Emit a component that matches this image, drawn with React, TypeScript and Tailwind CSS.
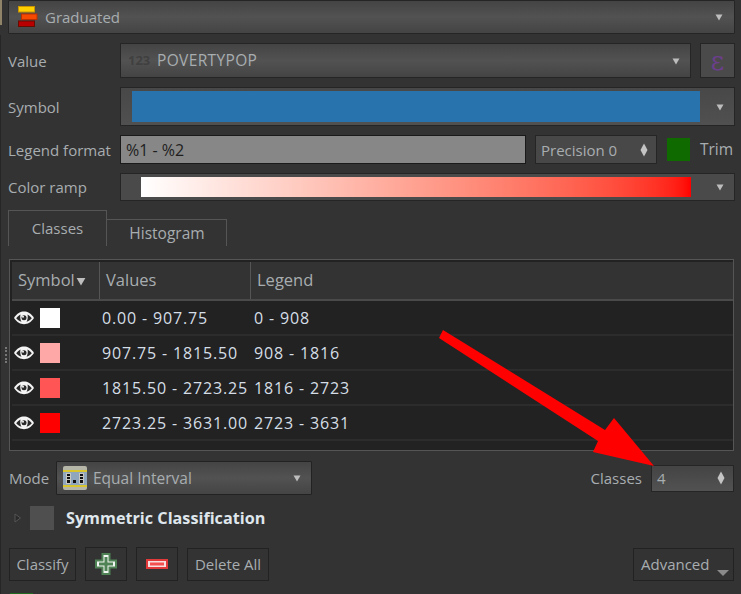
const font = { fontFamily: '"Open Sans", "Noto Sans", sans-serif' };

function Tri({ className = "" }: { className?: string }) {
  return (
    <svg width="8" height="8" viewBox="0 0 8 8" className={className}>
      <path d="M0.5 1.5H7.5L4 7.5Z" fill="#bdbdbd" />
    </svg>
  );
}

function Diamond() {
  return (
    <svg width="8" height="14" viewBox="0 0 8 14">
      <path d="M4 0.5L7.5 7L4 13.5L0.5 7Z" fill="#c4c4c4" />
    </svg>
  );
}

function Eye() {
  return (
    <svg width="20" height="14" viewBox="0 0 20 14">
      <path d="M0 7C3 2.200 6.500 0.500 10 0.500S17 2.200 20 7C17 11.500 13.500 13.200 10 13.200S3 11.500 0 7Z" fill="#f4f4f4" />
      <path d="M2.200 7.200C4 5 5.500 3.800 6.500 3.500C5.800 6 6.500 9.500 7.500 10.800C5.500 10.300 3.800 9 2.200 7.200Z" fill="#2a2a2a" />
      <path d="M17.800 7.200C16 5 14.500 3.800 13.500 3.500C14.200 6 13.500 9.500 12.500 10.800C14.500 10.300 16.200 9 17.800 7.200Z" fill="#2a2a2a" />
      <circle cx="10" cy="6.800" r="2.500" fill="#2a2a2a" />
      <circle cx="9" cy="5.800" r="1" fill="#f4f4f4" />
    </svg>
  );
}

const rows = [
  { c: "#ffffff", v: "0.00 - 907.75", l: "0 - 908" },
  { c: "#ffa8a8", v: "907.75 - 1815.50", l: "908 - 1816" },
  { c: "#ff5555", v: "1815.50 - 2723.25", l: "1816 - 2723" },
  { c: "#ff0000", v: "2723.25 - 3631.00", l: "2723 - 3631" },
];

export default function App() {
  return (
    <div style={font} className="relative w-[741px] h-[594px] overflow-hidden bg-[#333333] text-[15px] text-[#a8adb0] leading-none">
      <div className="absolute left-0 top-0 w-[2px] h-[25px] bg-[#8f8368]" />
      <div className="absolute left-0 top-[35px] w-[2px] h-[559px] border-l border-[#262626]" />
      <div className="absolute left-[5px] top-[347px] w-[2px] h-[16px] border-l-2 border-dotted border-[#777]" />
      <div className="absolute left-[10px] top-[593px] w-[23px] h-[1px] bg-[#1f6b1f]" />

      <div className="flex flex-col pl-2 pr-[6px]">
        <div className="flex items-center h-[34px] border border-[#252525] rounded-[1px] bg-gradient-to-b from-[#444] via-[#525252] to-[#444] pl-[9px] pr-[11px]">
          <svg width="20" height="22" viewBox="0 0 20 22">
            <rect x="0.500" y="0.500" width="16" height="5.500" fill="#ffd000" stroke="#c99400" />
            <rect x="3.500" y="8" width="15.500" height="5.500" fill="#f54800" stroke="#b83000" />
            <rect x="0.500" y="15" width="16" height="5.500" fill="#b80000" stroke="#660c00" />
          </svg>
          <span className="ml-[7px] pt-[1px]">Graduated</span>
          <Tri className="ml-auto" />
        </div>

        <div className="flex items-center mt-[9px] h-[35px]">
          <span className="w-[112px] shrink-0 pt-[1px]">Value</span>
          <div className="flex items-center flex-1 h-full border border-[#252525] bg-gradient-to-b from-[#444] via-[#525252] to-[#444] pl-[7px] pr-[10px]">
            <span className="w-[29px] text-[13px] font-bold text-[#404040]">123</span>
            <span className="pt-[1px] tracking-[0.35px] text-[15.5px]">POVERTYPOP</span>
            <Tri className="ml-auto" />
          </div>
          <div className="flex items-center justify-center ml-[9px] w-[35px] h-full border border-[#252525] bg-[#4a4a4a] font-['DejaVu_Serif'] text-[26px] text-[#6b3f8c]">
            ε
          </div>
        </div>

        <div className="flex items-center mt-[9px] h-[39px]">
          <span className="w-[112px] shrink-0 pt-[1px]">Symbol</span>
          <div className="flex items-center flex-1 h-full border border-[#252525] bg-gradient-to-b from-[#484848] to-[#505050] pl-[11px] pr-[10px]">
            <div className="w-[568px] h-[31px] bg-[#2872ad]" />
            <Tri className="ml-auto" />
          </div>
        </div>

        <div className="flex items-center mt-[9px] h-[29px]">
          <span className="w-[112px] shrink-0 whitespace-nowrap pt-[1px]">Legend format</span>
          <div className="flex items-center w-[406px] h-full border border-[#1a1a1a] bg-[#878787] pl-[5px] pt-[1px] text-[#1e1e1e] text-[16px]">
            %1 - %2
          </div>
          <div className="flex items-center ml-[9px] w-[122px] h-full border border-[#252525] bg-[#484848] pl-[5px] pr-[8px]">
            <span className="pt-[1px]">Precision 0</span>
            <span className="ml-auto flex"><Diamond /></span>
          </div>
          <div className="ml-[10px] w-[23px] h-[23px] bg-[#0f6b00]" />
          <span className="ml-[10px] pt-[1px] text-[15.5px]">Trim</span>
        </div>

        <div className="flex items-center mt-[9px] h-[28px]">
          <span className="w-[112px] shrink-0 pt-[1px]">Color ramp</span>
          <div className="flex items-center flex-1 h-full border border-[#252525] bg-[#4a4a4a] pl-[20px] pr-[10px]">
            <div className="w-[550px] h-[20px] bg-gradient-to-r from-white to-[#ff0000]" />
            <Tri className="ml-auto" />
          </div>
        </div>

        <div className="flex items-end mt-[9px] h-[36px]">
          <div className="flex items-center justify-center w-[99px] h-full border border-b-0 border-[#555] pb-[1px]">Classes</div>
          <div className="flex items-center justify-center w-[120px] h-[27px] border border-b-0 border-l-0 border-[#555] pt-[1px] pl-[1px] text-[15.5px]">Histogram</div>
        </div>

        <div className="flex flex-col mt-[13px] ml-[1px] h-[192px] border border-[#555] bg-[#222222] p-[2px] pr-0 w-[725px]">
          <div className="flex items-center h-[39px] shrink-0 bg-[#333333] border-b-2 border-[#4a4a4a] text-[16.500px]">
            <div className="flex items-center w-[88px] h-full border-r border-[#555] pl-[6px] relative">
              Symbol
              <Tri className="absolute left-[65px] top-[15px] scale-125" />
            </div>
            <div className="flex items-center w-[151px] h-full border-r border-[#555] pl-[6px]">Values</div>
            <div className="pl-[6px]">Legend</div>
          </div>
          {rows.map((r) => (
            <div key={r.v} className="flex items-center h-[35px] shrink-0 border-b-2 border-[#2c2c2c] text-[#d5dee6] whitespace-nowrap text-[16px] tracking-[0.85px]">
              <div className="flex items-center w-[88px] pl-[2px]">
                <Eye />
                <div className="ml-[6px] w-[20px] h-[20px]" style={{ background: r.c }} />
              </div>
              <div className="w-[151px] pl-[2px] pt-[1px]">{r.v}</div>
              <div className="pl-[3px] pt-[1px]">{r.l}</div>
            </div>
          ))}
        </div>

        <div className="flex items-center mt-[10px] h-[34px] pl-[1px]">
          <span className="w-[47px] pt-[1px]">Mode</span>
          <div className="flex items-center w-[256px] h-full border border-[#222] rounded-[1px] bg-gradient-to-b from-[#444] via-[#525252] to-[#444] pl-[6px] pr-[10px]">
            <svg width="24" height="24" viewBox="0 0 24 24">
              <rect x="0" y="0" width="24" height="24" rx="2" fill="#b5b5a8" />
              <rect x="0" y="5" width="24" height="14" fill="#8fa6bd" />
              <rect x="0" y="4" width="24" height="2" fill="#d9c62e" />
              <rect x="0" y="19" width="24" height="2" fill="#d9c62e" />
              <rect x="3" y="7" width="5" height="11" fill="#c8c8c0" />
              <rect x="16" y="7" width="5" height="11" fill="#c8c8c0" />
              <rect x="4" y="8" width="3" height="2" fill="#111" />
              <rect x="4" y="11" width="3" height="2" fill="#111" />
              <rect x="4" y="14" width="3" height="3" fill="#111" />
              <rect x="10" y="14" width="3" height="3" fill="#111" />
              <rect x="17" y="8" width="3" height="2" fill="#111" />
              <rect x="17" y="11" width="3" height="2" fill="#111" />
              <rect x="17" y="14" width="3" height="3" fill="#111" />
            </svg>
            <span className="ml-[6px] pt-[1px] text-[15.5px]">Equal Interval</span>
            <Tri className="ml-auto" />
          </div>
          <span className="ml-auto pt-[1px]">Classes</span>
          <div className="flex items-center ml-[9px] w-[83px] h-[27px] border border-[#252525] bg-gradient-to-b from-[#444] to-[#525252] pl-[5px] pr-[8px] mr-[1px]">
            <span className="pt-[1px]">4</span>
            <span className="ml-auto flex"><Diamond /></span>
          </div>
        </div>

        <div className="flex items-center mt-[10px] h-[25px] pl-[6px]">
          <svg width="8" height="10" viewBox="0 0 8 10">
            <path d="M1 1L6.500 5L1 9Z" fill="#2a2a2a" stroke="#555" />
          </svg>
          <div className="ml-[8px] w-[24px] h-[24px] bg-[#4f4f4f]" />
          <span className="ml-[12px] pt-[1px] font-bold text-[#dfe6ec] text-[16.200px]">Symmetric Classification</span>
        </div>

        <div className="flex items-center mt-[17px] h-[34px] pl-[1px]">
          <div className="flex items-center justify-center w-[67px] h-[33px] border border-[#222] pt-[1px]">Classify</div>
          <div className="flex items-center justify-center ml-[9px] w-[42px] h-full border border-[#222]">
            <svg width="22" height="22" viewBox="0 0 22 22">
              <path d="M7.500 1H14.500V7.500H21V14.500H14.500V21H7.500V14.500H1V7.500H7.500Z" fill="#f2f6f2" stroke="#4f8255" strokeWidth="2" />
              <path d="M9.500 4H12.500V9.500H18V12.500H12.500V18H9.500V12.500H4V9.500H9.500Z" fill="#4f8255" />
            </svg>
          </div>
          <div className="flex items-center justify-center ml-[9px] w-[42px] h-full border border-[#222]">
            <svg width="22" height="10" viewBox="0 0 22 10">
              <rect x="1" y="1" width="20" height="8" fill="#f8e0e0" stroke="#e23a3a" strokeWidth="2" />
              <rect x="4" y="3.500" width="14" height="3" fill="#f55050" />
            </svg>
          </div>
          <div className="flex items-center justify-center ml-[9px] w-[82px] h-[33px] border border-[#222] pt-[1px]">Delete All</div>
          <div className="flex items-center ml-auto w-[101px] h-[33px] border border-[#222] pl-[7px] pt-[1px] mr-[1px] relative">
            Advanced
            <svg width="12" height="6" viewBox="0 0 12 6" className="absolute right-[4px] top-[21px]">
              <path d="M0 0H12L6 6Z" fill="#8a8a8a" />
            </svg>
          </div>
        </div>
      </div>

      <svg width="741" height="594" viewBox="0 0 741 594" className="absolute left-0 top-0 pointer-events-none">
        <path d="M443 330L439 338L598 441L593 452L654 466L614 418L605 430Z" fill="#ff0000" />
      </svg>
    </div>
  );
}
